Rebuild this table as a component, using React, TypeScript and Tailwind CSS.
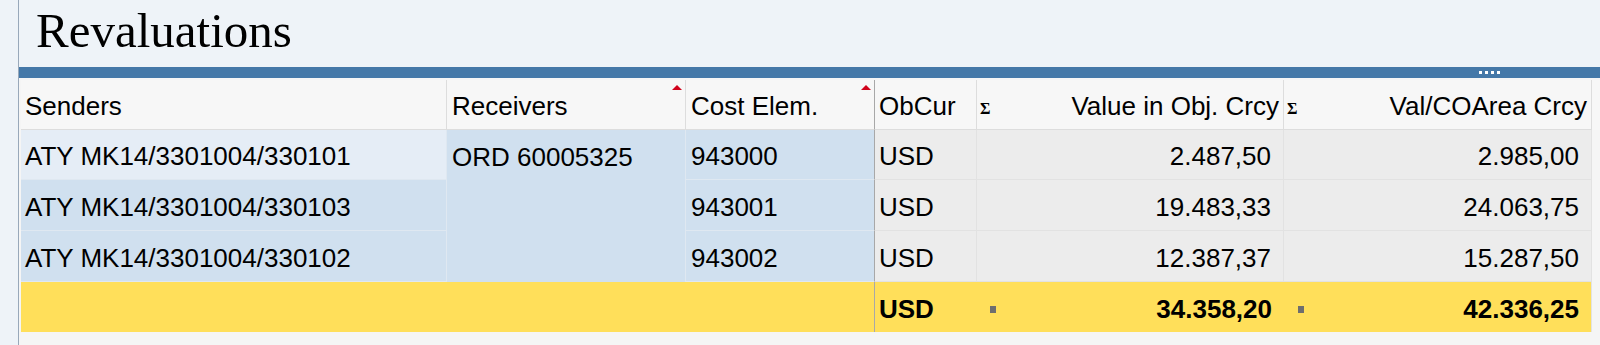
import React from 'react';

type Line = { sender: string; cost: string; cur: string; objVal: string; coVal: string };

const lines: Line[] = [
  { sender: 'ATY MK14/3301004/330101', cost: '943000', cur: 'USD', objVal: '2.487,50', coVal: '2.985,00' },
  { sender: 'ATY MK14/3301004/330103', cost: '943001', cur: 'USD', objVal: '19.483,33', coVal: '24.063,75' },
  { sender: 'ATY MK14/3301004/330102', cost: '943002', cur: 'USD', objVal: '12.387,37', coVal: '15.287,50' },
];

function SortMark() {
  return (
    <span className="absolute right-[3px] top-[5px] w-0 h-0 border-l-[5px] border-r-[5px] border-b-[5px] border-l-transparent border-r-transparent border-b-[#d0021b]" />
  );
}

function SumMark() {
  return <span className="font-['Liberation_Serif',serif] font-bold text-[16px] leading-none mt-[4px] text-black">Σ</span>;
}

export default function App() {
  return (
    <div className="h-[345px] w-[1600px] flex bg-[#eef3f8] font-['Liberation_Sans',Arial,sans-serif] text-[26px] text-black overflow-hidden">
      <div className="w-[18px] shrink-0" />
      <div className="flex-1 flex flex-col border-l border-[#98a8ba]">
        {/* title */}
        <div className="h-[67px] pl-[17px] pt-[6px]">
          <h1 className="font-['Liberation_Serif','Times_New_Roman',serif] text-[49px] leading-none">Revaluations</h1>
        </div>

        {/* sash bar */}
        <div className="h-[11px] bg-[#4478a8] flex items-center justify-end pr-[100px] gap-[3px]">
          <span className="w-[3px] h-[3px] bg-white" />
          <span className="w-[3px] h-[3px] bg-white" />
          <span className="w-[3px] h-[3px] bg-white" />
          <span className="w-[3px] h-[3px] bg-white" />
        </div>

        {/* grid */}
        <div className="flex-1 bg-[#f5f5f5] pt-[2px] pl-[2px] flex">
          <div className="grid grid-cols-[426px_239px_188px_103px_307px_308px] grid-rows-[50px_50px_51px_51px_50px] content-start">
            {/* header */}
            <div className="bg-[#f7f7f7] border-r border-b border-[#dddddd] flex items-center pl-[4px] pt-[4px]">Senders</div>
            <div className="relative bg-[#f7f7f7] border-r border-b border-[#dddddd] flex items-center pl-[5px] pt-[4px]">
              Receivers
              <SortMark />
            </div>
            <div className="relative bg-[#f7f7f7] border-b border-[#dddddd] flex items-center pl-[5px] pt-[4px]">
              Cost Elem.
              <SortMark />
            </div>
            <div className="bg-[#f7f7f7] border-l border-l-[#a8a8a8] border-r border-b border-[#dddddd] flex items-center pl-[4px] pt-[4px]">ObCur</div>
            <div className="bg-[#f7f7f7] border-r border-b border-[#dddddd] flex items-center justify-between pl-[3px] pr-[4px] pt-[4px]">
              <SumMark />
              <span>Value in Obj. Crcy</span>
            </div>
            <div className="bg-[#f7f7f7] border-r border-b border-[#dddddd] flex items-center justify-between pl-[3px] pr-[4px] pt-[4px]">
              <SumMark />
              <span>Val/COArea Crcy</span>
            </div>

            {/* body */}
            {lines.map((l, i) => (
              <React.Fragment key={l.cost}>
                <div className={`${i === 0 ? 'bg-[#e5edf6]' : 'bg-[#d0e0ef]'} border-r border-b border-[#dfe8f1] flex items-center pl-[4px] pt-[4px]`}>{l.sender}</div>
                {i === 0 && (
                  <div className="row-span-3 bg-[#d0e0ef] border-r border-[#dfe8f1]">
                    <div className="h-[50px] flex items-center pl-[5px] pt-[4px]">ORD 60005325</div>
                  </div>
                )}
                <div className="bg-[#d0e0ef] border-b border-[#dfe8f1] flex items-center pl-[5px] pt-[4px]">{l.cost}</div>
                <div className="bg-[#ececec] border-l border-l-[#a8a8a8] border-r border-b border-[#e2e2e2] flex items-center pl-[4px] pt-[4px]">{l.cur}</div>
                <div className="bg-[#ececec] border-r border-b border-[#e2e2e2] flex items-center justify-end pr-[12px] pt-[4px]">{l.objVal}</div>
                <div className="bg-[#ececec] border-r border-b border-[#e2e2e2] flex items-center justify-end pr-[12px] pt-[4px]">{l.coVal}</div>
              </React.Fragment>
            ))}

            {/* totals */}
            <div className="col-span-3 bg-[#ffdf5a]" />
            <div className="bg-[#ffdf5a] border-l border-[#a8a8a8] flex items-center pl-[4px] pt-[4px] font-bold">USD</div>
            <div className="bg-[#ffdf5a] flex items-center justify-between pl-[13px] pr-[12px] pt-[4px] font-bold">
              <span className="w-[6px] h-[7px] bg-[#6e6e6e]" />
              <span>34.358,20</span>
            </div>
            <div className="bg-[#ffdf5a] border-r border-[#e2e2e2] flex items-center justify-between pl-[14px] pr-[12px] pt-[4px] font-bold">
              <span className="w-[6px] h-[7px] bg-[#6e6e6e]" />
              <span>42.336,25</span>
            </div>
          </div>
          <div className="h-[50px] flex-1 bg-[#f7f7f7]" />
        </div>
      </div>
    </div>
  );
}
